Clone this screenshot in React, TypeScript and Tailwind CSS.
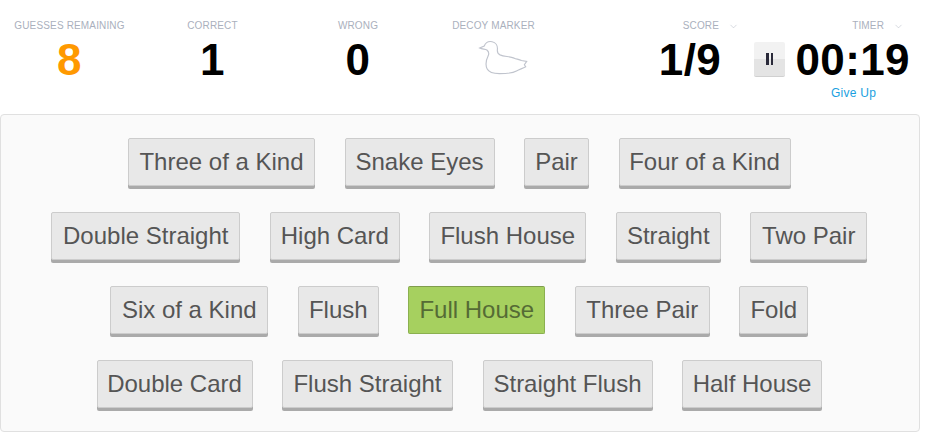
import { ChevronDown } from 'lucide-react'
import clsx from 'clsx'

const rows = [
  [
    { name: 'Three of a Kind', width: 'w-[187px]' },
    { name: 'Snake Eyes', width: 'w-[150px]' },
    { name: 'Pair', width: 'w-[65px]' },
    { name: 'Four of a Kind', width: 'w-[172px]' },
  ],
  [
    { name: 'Double Straight', width: 'w-[189px]' },
    { name: 'High Card', width: 'w-[130px]' },
    { name: 'Flush House', width: 'w-[157px]' },
    { name: 'Straight', width: 'w-[105px]' },
    { name: 'Two Pair', width: 'w-[117px]' },
  ],
  [
    { name: 'Six of a Kind', width: 'w-[158px]' },
    { name: 'Flush', width: 'w-[81px]' },
    { name: 'Full House', width: 'w-[137px]' },
    { name: 'Three Pair', width: 'w-[135px]' },
    { name: 'Fold', width: 'w-[69px]' },
  ],
  [
    { name: 'Double Card', width: 'w-[156px]' },
    { name: 'Flush Straight', width: 'w-[171px]' },
    { name: 'Straight Flush', width: 'w-[170px]' },
    { name: 'Half House', width: 'w-[140px]' },
  ],
]

function Label({ children }: { children: React.ReactNode }) {
  return <div className="h-[12px] text-[10px] leading-[12px] tracking-[0.15px] whitespace-nowrap text-[#aab0bd]">{children}</div>
}

function Stat({ label, value, color, width }: { label: string; value: string; color: string; width: string }) {
  return (
    <div className={clsx('shrink-0 text-center', width)}>
      <Label>{label}</Label>
      <div className={clsx('mt-[4px] text-[44px] leading-[48px] font-bold tracking-[0.4px]', color)}>{value}</div>
    </div>
  )
}

function Duck() {
  return (
    <svg width={50} height={35} viewBox="55 90 152 106" fill="none" stroke="#c0c4cd" strokeWidth={3.5} className="ml-[48px] mt-[8px]">
      <path d="M60 114 L74 108 C78 98 88 93 98 95 C108 97 115 106 114 118 C113 125 114 131 122 135 C135 141 150 139 165 145 C172 148 180 148 187 152 L203 155 L196 165 L200 171 C190 177 182 178 172 184 C162 190 150 192 120 192 C100 192 88 188 83 178 C77 166 80 150 86 138 C89 131 88 125 82 120 C76 117 68 118 60 114 Z" />
    </svg>
  )
}

export default function App() {
  return (
    <div className="h-[438px] w-[939px] bg-white font-['Liberation_Sans',Arial,sans-serif]">
      <div className="flex h-[114px] pt-[20px]">
        <Stat label="GUESSES REMAINING" value="8" color="text-[#ff9900]" width="w-[139px]" />
        <Stat label="CORRECT" value="1" color="text-black" width="w-[147px]" />
        <Stat label="WRONG" value="0" color="text-black" width="w-[144px]" />
        <div className="w-[127px] shrink-0 text-center">
          <Label>DECOY MARKER</Label>
          <Duck />
        </div>
        <div className="ml-[97px] w-[72px] shrink-0">
          <div className="flex items-center justify-end pr-[5px] text-[#aab0bd]">
            <Label>SCORE</Label>
            <ChevronDown size={11} strokeWidth={1} className="ml-[9px] mr-[-18px] shrink-0" />
          </div>
          <div className="mt-[4px] text-center text-[44px] leading-[48px] font-bold tracking-[0.4px] text-black">1/9</div>
        </div>
        <div className="ml-[28px] w-[156px] shrink-0">
          <div className="flex h-[12px] items-center justify-end pr-[24px] text-[#aab0bd]">
            <Label>TIMER</Label>
            <ChevronDown size={11} strokeWidth={1} className="ml-[9px] mr-[-18px] shrink-0" />
          </div>
          <div className="mt-[10px] flex items-start">
            <div className="flex h-[35px] w-[32px] items-center justify-center gap-[2px] rounded-[2px] border-b border-[#d0d0d0] bg-[linear-gradient(#f2f2f2_50%,#e4e4e4_50%)]">
              <span className="h-[12px] w-[2.5px] bg-[#2a2a3a]" />
              <span className="h-[12px] w-[2.5px] bg-[#2a2a3a]" />
            </div>
            <div className="ml-[10px] mt-[-6px] text-[44px] leading-[48px] font-bold tracking-[0.4px] text-black">00:19</div>
          </div>
          <div className="mt-[2px] pl-[77px] text-[12px] leading-[14px] tracking-[0.25px] text-[#1a9fe0]">Give Up</div>
        </div>
      </div>
      <div className="flex h-[318px] w-[920px] flex-col items-center gap-[26px] rounded-[4px] border border-[#e0e0e0] bg-[#fafafa] pt-[23px]">
        {rows.map((row) => (
          <div key={row[0].name} className="mr-[1.5px] flex h-[48px] gap-[29.5px]">
            {row.map((item) => (
              <button
                key={item.name}
                className={clsx(
                  'h-[48px] rounded-[2px] border text-center text-[24px] leading-[46px] whitespace-nowrap',
                  item.width,
                  item.name === 'Full House'
                    ? 'border-[#8bb04f] border-t-[#7f9c4d] bg-[#a6d05f] text-[#556b35]'
                    : 'border-[#cccccc] bg-[#e8e8e8] text-[#555555] shadow-[0_3px_0_#aaaaaa]',
                )}
              >
                {item.name}
              </button>
            ))}
          </div>
        ))}
      </div>
    </div>
  )
}
